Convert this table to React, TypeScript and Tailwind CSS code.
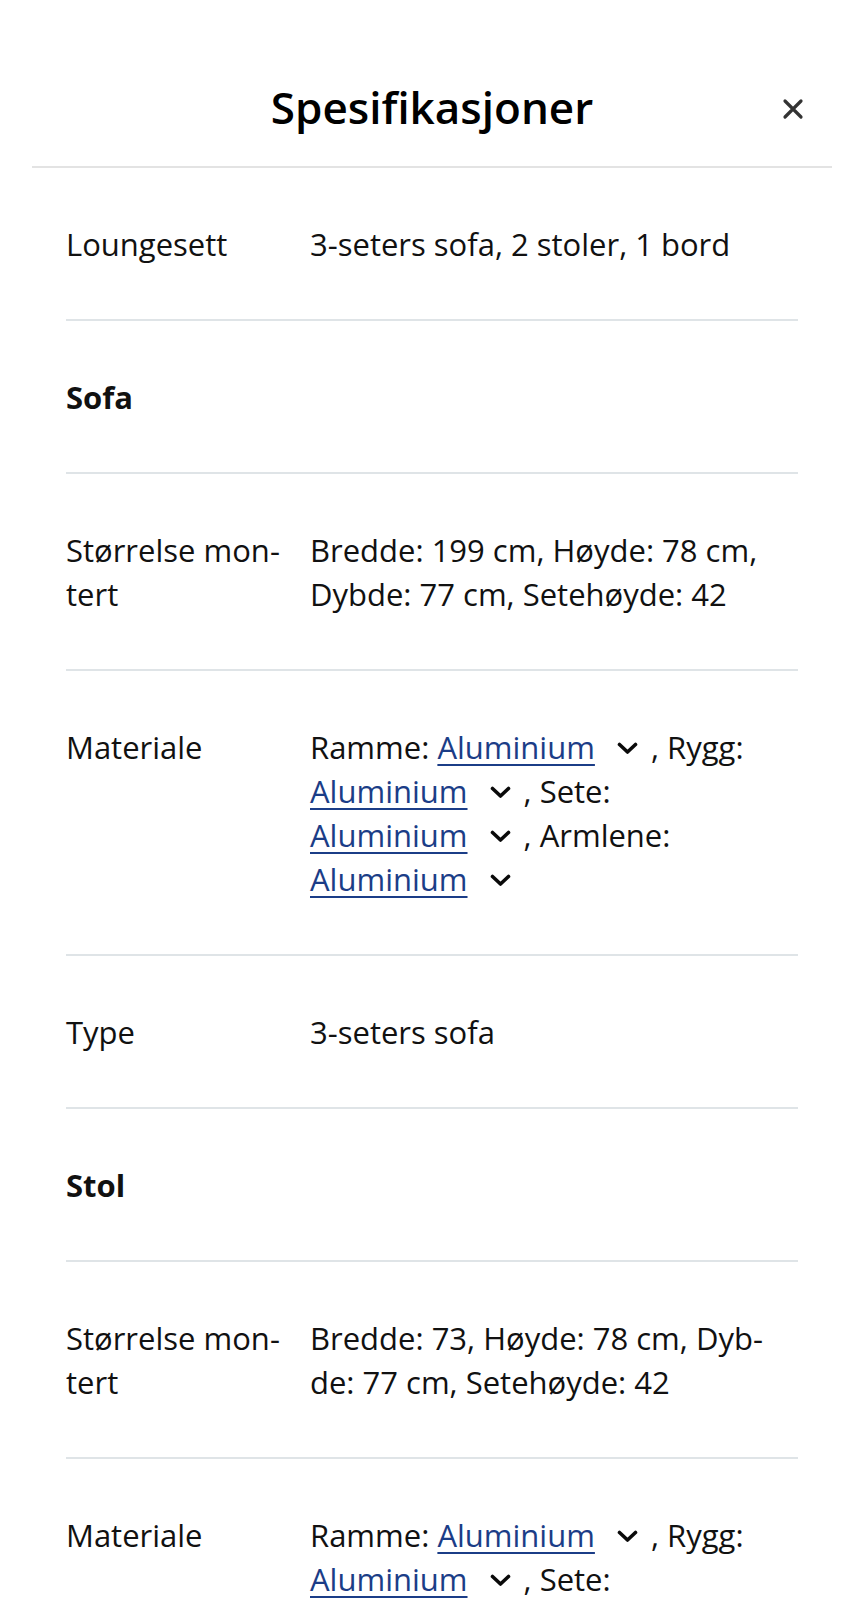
import React from "react";

const Chevron = () => (
  <span className="inline-block ml-[21px] mr-[4px] align-middle relative -top-[2px]">
    <svg width="23" height="13" viewBox="0 0 23 13" fill="none">
      <polyline points="3.5,2.5 11.5,10 19.5,2.5" stroke="#0a0a0a" strokeWidth="3.6" strokeLinecap="round" strokeLinejoin="round" />
    </svg>
  </span>
);

const Mat = ({ label, last }: { label: string; last?: boolean }) => (
  <>
    {label}:{" "}
    <span className="whitespace-nowrap">
      <a href="#" className="text-[#1b3d87] underline decoration-2 underline-offset-[5px]">Aluminium</a>
      <Chevron />
    </span>
    {last ? null : " ,"}
  </>
);

const Row = ({ label, children, bold }: { label: React.ReactNode; children?: React.ReactNode; bold?: boolean }) => (
  <div className="grid grid-cols-[244px_1fr] border-b-2 border-[#dfe4e7] pt-[54px] pb-[53px]">
    <div className={bold ? "font-bold pr-4" : "pr-4"}>{label}</div>
    <div className="pr-[8px]">{children}</div>
  </div>
);

export default function App() {
  return (
    <div className="min-h-[1600px] bg-white text-[#111] font-['Open_Sans','Noto_Sans',sans-serif]" lang="no">
      <div className="mx-8 h-[168px] border-b-2 border-[#e3e3e3] pt-[48px] grid grid-cols-[1fr_auto_1fr] items-center">
        <div />
        <h1 className="text-[44px] font-semibold text-black leading-none">Spesifikasjoner</h1>
        <div className="flex justify-end pr-[28px] pt-[4px]">
          <button aria-label="Lukk" className="flex items-center justify-center">
            <svg width="22" height="22" viewBox="0 0 22 22" fill="none">
              <path d="M3 3L19 19M19 3L3 19" stroke="#333" strokeWidth="3.2" strokeLinecap="round" />
            </svg>
          </button>
        </div>
      </div>
      <div className="px-[66px] text-[31px] leading-[44px]">
        <Row label="Loungesett">3-seters sofa, 2 stoler, 1 bord</Row>
        <Row label="Sofa" bold />
        <Row label={"Størrelse mon\u00ADtert"}>Bredde: 199 cm, Høyde: 78 cm, Dybde: 77 cm, Setehøyde: 42</Row>
        <Row label="Materiale">
          <Mat label="Ramme" /> <Mat label="Rygg" /> <Mat label="Sete" /> <Mat label="Armlene" last />
        </Row>
        <Row label="Type">3-seters sofa</Row>
        <Row label="Stol" bold />
        <Row label={"Størrelse mon\u00ADtert"}>{"Bredde: 73, Høyde: 78 cm, Dyb\u00ADde: 77 cm, Setehøyde: 42"}</Row>
        <Row label="Materiale">
          <Mat label="Ramme" /> <Mat label="Rygg" /> <Mat label="Sete" /> <Mat label="Armlene" last />
        </Row>
      </div>
    </div>
  );
}
